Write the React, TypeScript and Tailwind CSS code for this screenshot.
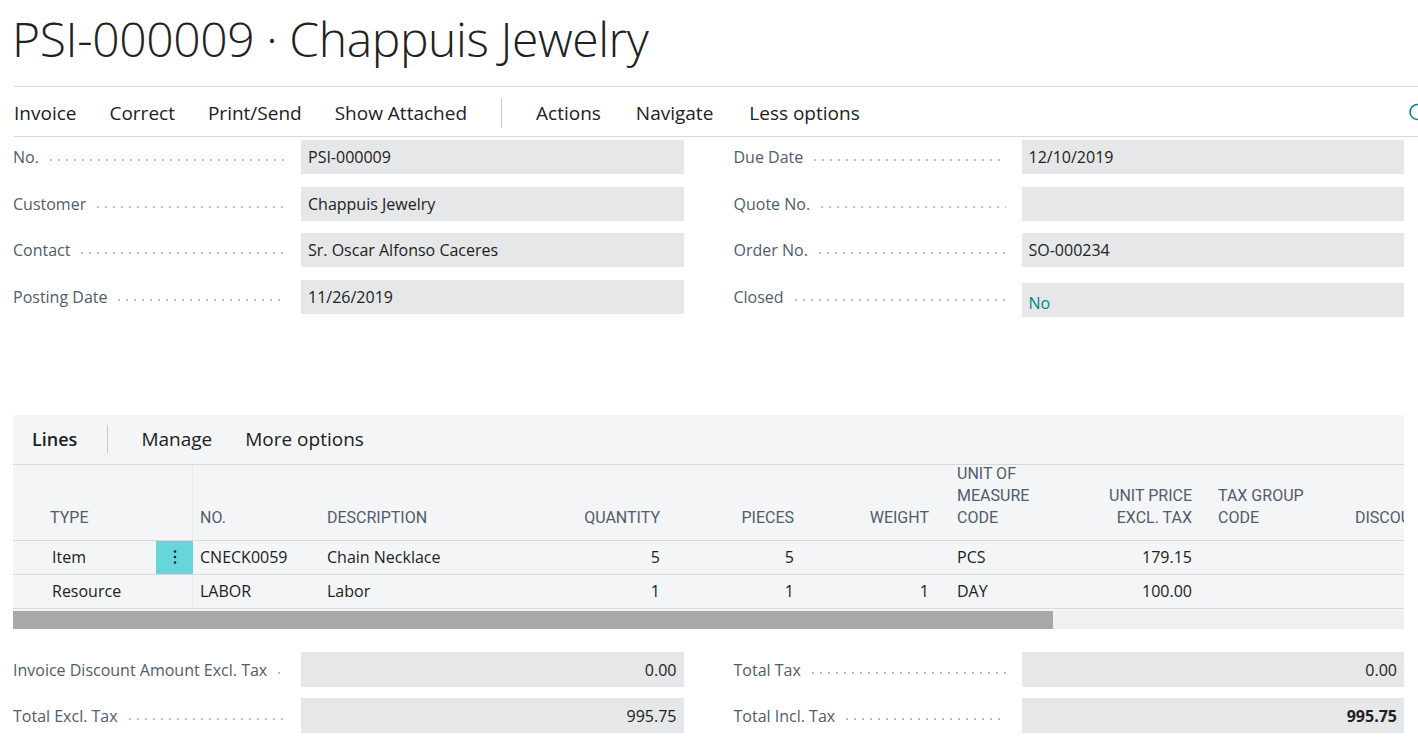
import React from 'react';

const font = 'font-["Open_Sans","Noto_Sans",sans-serif]';
const cond = 'font-["Roboto","Liberation_Sans",sans-serif]';

const Dots = () => (
  <span className="flex-1 h-[4px] mx-2 mt-[6px] bg-[radial-gradient(circle,#b8bcc2_0.9px,transparent_1.2px)] bg-[length:8px_4px] bg-repeat-x" />
);

function Field({
  label,
  value,
  teal,
  right,
  bold,
  offset,
  tall,
}: {
  label: string;
  value?: string;
  teal?: boolean;
  right?: boolean;
  bold?: boolean;
  offset?: boolean;
  tall?: boolean;
}) {
  return (
    <div className={`flex items-start ${tall ? 'h-[35px]' : 'h-[34px]'}`}>
      <div
        className={`w-[288px] flex items-center pr-[8px] text-[16px] text-[#505c6d] ${
          tall ? 'h-[35px] pt-[2px]' : 'h-[34px]'
        }`}
      >
        <span className="whitespace-nowrap">{label}</span>
        <Dots />
      </div>
      <div
        className={`flex-1 bg-[#e6e7e9] flex items-center px-[7px] text-[16px] ${
          tall ? 'h-[35px] pt-[2px]' : 'h-[34px]'
        } ${right ? 'justify-end' : ''} ${teal ? 'text-[#00858a]' : 'text-[#212121]'} ${
          bold ? 'font-bold' : ''
        } ${offset ? 'mt-[3px] pt-[6px]' : ''}`}
      >
        {value}
      </div>
    </div>
  );
}

type Col = { key: string; label: string[]; w: string; align: 'l' | 'r'; pad: string };

const cols: Col[] = [
  { key: 'type', label: ['TYPE'], w: 'w-[143px]', align: 'l', pad: 'pl-[37px]' },
  { key: 'dots', label: [], w: 'w-[37px]', align: 'l', pad: '' },
  { key: 'no', label: ['NO.'], w: 'w-[127px]', align: 'l', pad: 'pl-[7px]' },
  { key: 'desc', label: ['DESCRIPTION'], w: 'w-[200px]', align: 'l', pad: 'pl-[7px]' },
  { key: 'qty', label: ['QUANTITY'], w: 'w-[147px]', align: 'r', pad: 'pr-[7px]' },
  { key: 'pcs', label: ['PIECES'], w: 'w-[134px]', align: 'r', pad: 'pr-[7px]' },
  { key: 'wt', label: ['WEIGHT'], w: 'w-[149px]', align: 'r', pad: 'pr-[21px]' },
  { key: 'uom', label: ['UNIT OF', 'MEASURE', 'CODE'], w: 'w-[120px]', align: 'l', pad: 'pl-[7px]' },
  { key: 'price', label: ['UNIT PRICE', 'EXCL. TAX'], w: 'w-[129px]', align: 'r', pad: 'pr-[7px]' },
  { key: 'tax', label: ['TAX GROUP', 'CODE'], w: 'w-[149px]', align: 'l', pad: 'pl-[19px]' },
  { key: 'disc', label: ['DISCOUNT'], w: 'w-[120px]', align: 'l', pad: 'pl-[7px]' },
];

const rows: Record<string, string>[] = [
  { type: 'Item', no: 'CNECK0059', desc: 'Chain Necklace', qty: '5', pcs: '5', wt: '', uom: 'PCS', price: '179.15' },
  { type: 'Resource', no: 'LABOR', desc: 'Labor', qty: '1', pcs: '1', wt: '1', uom: 'DAY', price: '100.00' },
];

export default function App() {
  return (
    <div className={`w-[1418px] h-[751px] overflow-hidden bg-white ${font}`}>
      {/* title */}
      <div className="h-[86px] pl-[12px] pt-[9px]">
        <h1 className="text-[48px] font-light leading-[60px] text-[#212121] tracking-[-0.4px]">
          PSI-000009 · Chappuis Jewelry
        </h1>
      </div>

      {/* action bar */}
      <div className="ml-[14px] h-[51px] pt-[3px] border-y border-[#d8d9db] flex items-center text-[19px] text-[#212121]">
        <span className="mr-[33px]">Invoice</span>
        <span className="mr-[33px]">Correct</span>
        <span className="mr-[33px]">Print/Send</span>
        <span className="mr-[34px]">Show Attached</span>
        <span className="w-px h-[30px] bg-[#c8c9cb] mr-[34px]" />
        <span className="mr-[35px]">Actions</span>
        <span className="mr-[36px]">Navigate</span>
        <span>Less options</span>
        <svg className="ml-auto -mr-[10px] shrink-0" width="20" height="20" viewBox="0 0 20 20">
          <circle cx="9.5" cy="9" r="7.5" fill="none" stroke="#00858a" strokeWidth="1.6" />
          <line x1="15" y1="14.5" x2="19.5" y2="19" stroke="#00858a" strokeWidth="1.8" />
        </svg>
      </div>

      {/* header fields */}
      <div className="pl-[13px] pr-[14px] pt-[3px] grid grid-cols-2 gap-x-[50px]">
        <div className="flex flex-col gap-[12.5px]">
          <Field label="No." value="PSI-000009" />
          <Field label="Customer" value="Chappuis Jewelry" />
          <Field label="Contact" value="Sr. Oscar Alfonso Caceres" />
          <Field label="Posting Date" value="11/26/2019" />
        </div>
        <div className="flex flex-col gap-[12.5px]">
          <Field label="Due Date" value="12/10/2019" />
          <Field label="Quote No." value="" />
          <Field label="Order No." value="SO-000234" />
          <Field label="Closed" value="No" teal offset />
        </div>
      </div>

      {/* lines */}
      <div className="mt-[101px] ml-[13px] mr-[14px] bg-[#f4f5f7]">
        <div className="h-[50px] border-b border-[#d8d9db] flex items-center text-[19px] text-[#212121]">
          <span className="pl-[19px] pr-[30px] font-semibold text-[18px]">Lines</span>
          <span className="w-px h-[28px] bg-[#c8c9cb] mr-[33px]" />
          <span className="mr-[33px]">Manage</span>
          <span>More options</span>
        </div>

        <div className="overflow-hidden">
          {/* column headers */}
          <div className={`flex h-[76px] border-b border-[#d8d9db] ${cond} text-[16px] leading-[22px] text-[#505c6d]`}>
            {cols.map((c) => (
              <div
                key={c.key}
                className={`${c.w} shrink-0 flex flex-col justify-end pb-[11px] whitespace-nowrap ${c.pad} ${
                  c.align === 'r' ? 'items-end' : 'items-start'
                } ${c.key === 'dots' ? 'border-r border-[#e8e9eb]' : ''}`}
              >
                {c.label.map((l) => (
                  <span key={l}>{l}</span>
                ))}
              </div>
            ))}
          </div>

          {/* rows */}
          {rows.map((r, i) => (
            <div key={i} className="flex h-[34px] border-b border-[#d8d9db] text-[16px] text-[#212121]">
              {cols.map((c) =>
                c.key === 'dots' ? (
                  <div
                    key={c.key}
                    className={`${c.w} shrink-0 flex items-center justify-center ${
                      i === 0 ? 'bg-[#66d5dc]' : 'border-r border-[#e8e9eb]'
                    }`}
                  >
                    {i === 0 && (
                      <svg width="4" height="16" viewBox="0 0 4 16">
                        <circle cx="2" cy="2.5" r="1.3" fill="#212121" />
                        <circle cx="2" cy="8" r="1.3" fill="#212121" />
                        <circle cx="2" cy="13.5" r="1.3" fill="#212121" />
                      </svg>
                    )}
                  </div>
                ) : (
                  <div
                    key={c.key}
                    className={`${c.w} shrink-0 flex items-center whitespace-nowrap ${c.pad} ${
                      c.align === 'r' ? 'justify-end' : ''
                    } ${c.key === 'type' ? 'pl-[39px]' : ''}`}
                  >
                    {r[c.key] ?? ''}
                  </div>
                )
              )}
            </div>
          ))}
        </div>

        {/* scrollbar */}
        <div className="mt-[2px] h-[18px] bg-[#f0f0f0] flex">
          <div className="w-[1040px] bg-[#a8a8a8]" />
        </div>
      </div>

      {/* totals */}
      <div className="pl-[13px] pr-[14px] pt-[23px] grid grid-cols-2 gap-x-[50px]">
        <div className="flex flex-col gap-[11px]">
          <Field label="Invoice Discount Amount Excl. Tax" value="0.00" right tall />
          <Field label="Total Excl. Tax" value="995.75" right tall />
        </div>
        <div className="flex flex-col gap-[11px]">
          <Field label="Total Tax" value="0.00" right tall />
          <Field label="Total Incl. Tax" value="995.75" right bold tall />
        </div>
      </div>
    </div>
  );
}
